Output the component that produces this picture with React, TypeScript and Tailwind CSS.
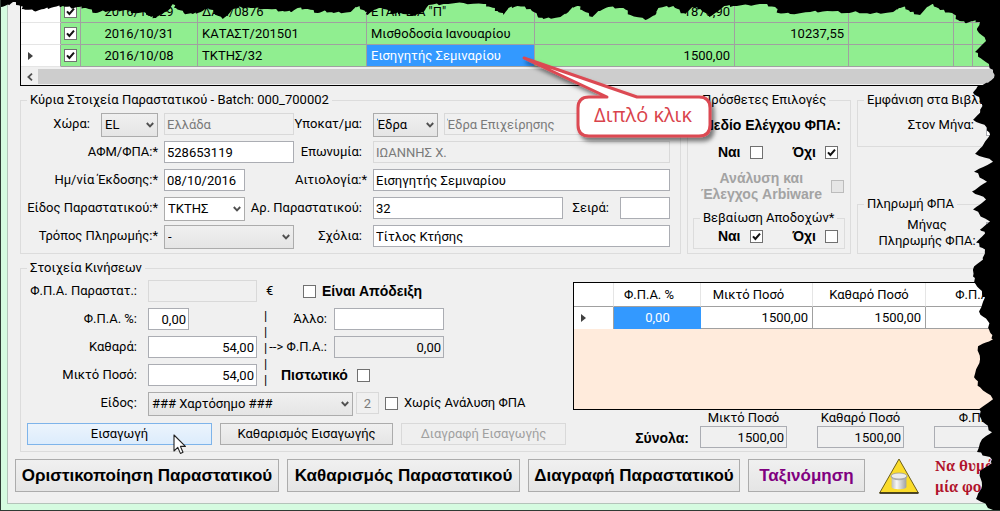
import { useState } from 'react';
import type { InputHTMLAttributes, ReactNode } from 'react';
import { clsx } from 'clsx';

interface SelectBoxProps {
  id: string;
  options: string[];
  label?: string;
  className?: string;
  flat?: boolean;
}

function SelectBox({ id, options, label, className, flat }: SelectBoxProps) {
  return (
    <span className={clsx('relative block h-6 shrink-0', className)}>
      <select
        id={id}
        aria-label={label}
        className={clsx(
          'block h-6 w-full appearance-none border border-[#acacac] pr-4 pl-[3px] leading-5 outline-none',
          flat ? 'bg-white' : 'bg-linear-to-b from-[#f0f0f0] to-[#e5e5e5]'
        )}
      >
        {options.map(o => (
          <option key={o}>{o}</option>
        ))}
      </select>
      <svg className="pointer-events-none absolute top-2 right-1 h-2 w-2" viewBox="0 0 8 8" fill="none">
        <path d="M0.8 2 L4 5.4 L7.2 2" stroke="#505050" strokeWidth="1.9" />
      </svg>
    </span>
  );
}

interface TextBoxProps extends InputHTMLAttributes<HTMLInputElement> {
  right?: boolean;
  gray?: boolean;
}

function TextBox({ className, right, gray, disabled, ...rest }: TextBoxProps) {
  return (
    <input
      type="text"
      disabled={disabled}
      className={clsx(
        'block h-[22px] min-w-0 border px-[2px] outline-none',
        right && 'text-right',
        disabled ? 'border-[#d9d9d9] text-[#7a7a7a]' : 'border-[#abadb3]',
        !disabled && !gray && 'bg-white',
        className
      )}
      {...rest}
    />
  );
}

interface TickProps {
  id: string;
  label?: string;
  on?: boolean;
  disabled?: boolean;
}

function Tick({ id, label, on = false, disabled }: TickProps) {
  const [checked, setChecked] = useState(on);
  return (
    <span className="relative block h-[13px] w-[13px] shrink-0">
      <input
        type="checkbox"
        id={id}
        aria-label={label}
        checked={checked}
        disabled={disabled}
        onChange={e => setChecked(e.target.checked)}
        className={clsx(
          'block h-[13px] w-[13px] appearance-none border',
          disabled ? 'border-[#bcbcbc] bg-[#e6e6e6]' : 'border-[#707070] bg-white'
        )}
      />
      {checked && (
        <svg className="pointer-events-none absolute inset-0 h-[13px] w-[13px]" viewBox="0 0 13 13" fill="none">
          <path d="M3 6.3 L5.4 9 L10 3.6" stroke="#111" strokeWidth="2" />
        </svg>
      )}
    </span>
  );
}

interface GroupProps {
  title: string;
  className?: string;
  children: ReactNode;
}

function Group({ title, className, children }: GroupProps) {
  return (
    <fieldset className={clsx('min-w-0 border border-[#dcdcdc]', className)}>
      <legend className="ml-[6px] px-[3px] leading-4 whitespace-nowrap">{title}</legend>
      {children}
    </fieldset>
  );
}

interface FieldLabelProps {
  htmlFor: string;
  className?: string;
  children: ReactNode;
}

function FieldLabel({ htmlFor, className, children }: FieldLabelProps) {
  return (
    <label htmlFor={htmlFor} className={clsx('shrink-0 text-right leading-[22px] whitespace-nowrap', className)}>
      {children}
    </label>
  );
}

const strong = "font-['Liberation_Sans',sans-serif] text-[14px] leading-4 font-bold";

const documents = [
  { date: '2016/10/29', code: 'ΔΑΠ/0876', reason: 'ΕΤΑΙΡΕΙΑ "Π"', debit: '1876,90', credit: '' },
  { date: '2016/10/31', code: 'ΚΑΤΑΣΤ/201501', reason: 'Μισθοδοσία Ιανουαρίου', debit: '', credit: '10237,55' },
  { date: '2016/10/08', code: 'ΤΚΤΗΣ/32', reason: 'Εισηγητής Σεμιναρίου', debit: '1500,00', credit: '' },
];

function RowArrow() {
  return (
    <svg className="ml-[7px] h-2 w-[5px]" viewBox="0 0 5 8">
      <path d="M0 0 L5 4 L0 8 Z" fill="#404040" />
    </svg>
  );
}

function DocumentsGrid() {
  const cell = 'h-[22px] border-r border-b border-[#a0a0a0] px-1';
  return (
    <div className="border-b border-l border-black bg-white pt-px">
      <table className="w-full table-fixed border-separate border-spacing-0 bg-[#90ee90]">
        <colgroup>
          <col className="w-10" />
          <col className="w-5" />
          <col className="w-[117px]" />
          <col className="w-[169px]" />
          <col className="w-[168px]" />
          <col className="w-[200px]" />
          <col className="w-[114px]" />
          <col className="w-[105px]" />
          <col className="w-[19px]" />
          <col />
        </colgroup>
        <tbody>
          {documents.map((d, i) => {
            const selected = i === documents.length - 1;
            return (
              <tr key={d.code}>
                <td className="h-[22px] border-r border-b border-r-[#a0a0a0] border-b-[#e5e5e5] bg-white">
                  {selected && <RowArrow />}
                </td>
                <td className="h-[22px] border-r border-b border-[#a0a0a0] pl-[3px]">
                  <Tick id={`doc-${i}`} label={d.code} on />
                </td>
                <td className={clsx(cell, 'text-center')}>{d.date}</td>
                <td className={cell}>{d.code}</td>
                <td className={clsx(cell, selected && 'bg-[#3399ff] text-white')}>{d.reason}</td>
                <td className={clsx(cell, 'text-right')}>{d.debit}</td>
                <td className={clsx(cell, 'text-right')}>{d.credit}</td>
                <td className={cell} />
                <td className={cell} />
                <td className={cell} />
              </tr>
            );
          })}
        </tbody>
      </table>
      <div className="flex h-[18px] items-stretch bg-[#f0f0f0] pt-[2px] pb-px">
        <button type="button" aria-label="Κύλιση αριστερά" className="flex w-[17px] items-center justify-center">
          <svg className="h-2 w-[6px]" viewBox="0 0 6 8" fill="none">
            <path d="M5 0.7 L1.4 4 L5 7.3" stroke="#505050" strokeWidth="1.8" />
          </svg>
        </button>
        <div className="flex-1 bg-[#cdcdcd]" />
      </div>
    </div>
  );
}

function MainDetails() {
  return (
    <Group title="Κύρια Στοιχεία Παραστατικού - Batch: 000_700002" className="pr-[10px] pb-[6px]">
      <div className="flex flex-col gap-[6px] pt-[5px]">
        <div className="flex h-[22px]">
          <FieldLabel htmlFor="country" className="w-[69px]">Χώρα:</FieldLabel>
          <SelectBox id="country" options={['EL']} className="ml-[11px] w-[57px]" />
          <TextBox aria-label="Όνομα χώρας" disabled defaultValue="Ελλάδα" className="ml-[6px] w-[130px]" />
          <FieldLabel htmlFor="branch" className="w-[68px]">Υποκατ/μα:</FieldLabel>
          <SelectBox id="branch" options={['Έδρα']} className="ml-[11px] w-[65px]" />
          <TextBox aria-label="Όνομα υποκαταστήματος" disabled defaultValue="Έδρα Επιχείρησης" className="ml-[6px] flex-1" />
        </div>
        <div className="flex h-[22px]">
          <FieldLabel htmlFor="vat" className="w-[137px]">ΑΦΜ/ΦΠΑ:*</FieldLabel>
          <TextBox id="vat" defaultValue="528653119" className="ml-[6px] w-[130px]" />
          <FieldLabel htmlFor="name" className="w-[68px]">Επωνυμία:</FieldLabel>
          <TextBox id="name" disabled defaultValue="ΙΩΑΝΝΗΣ Χ." className="ml-[11px] flex-1" />
        </div>
        <div className="flex h-[22px]">
          <FieldLabel htmlFor="issued" className="w-[137px]">Ημ/νία Έκδοσης:*</FieldLabel>
          <TextBox id="issued" defaultValue="08/10/2016" className="ml-[6px] w-[81px]" />
          <FieldLabel htmlFor="reason" className="w-[122px]">Αιτιολογία:*</FieldLabel>
          <TextBox id="reason" defaultValue="Εισηγητής Σεμιναρίου" className="ml-[6px] flex-1" />
        </div>
        <div className="flex h-[22px]">
          <FieldLabel htmlFor="doctype" className="w-[137px]">Είδος Παραστατικού:*</FieldLabel>
          <SelectBox id="doctype" options={['ΤΚΤΗΣ']} flat className="ml-[6px] w-[81px]" />
          <FieldLabel htmlFor="docno" className="w-[117px]">Αρ. Παραστατικού:</FieldLabel>
          <TextBox id="docno" defaultValue="32" className="ml-[11px] flex-1" />
          <FieldLabel htmlFor="series" className="w-[46px]">Σειρά:</FieldLabel>
          <TextBox id="series" className="ml-[11px] w-[50px]" />
        </div>
        <div className="flex h-[22px]">
          <FieldLabel htmlFor="payment" className="w-[137px]">Τρόπος Πληρωμής:*</FieldLabel>
          <SelectBox id="payment" options={['-']} className="ml-[6px] w-[130px]" />
          <FieldLabel htmlFor="notes" className="w-[68px]">Σχόλια:</FieldLabel>
          <TextBox id="notes" defaultValue="Τίτλος Κτήσης" className="ml-[11px] flex-1" />
        </div>
      </div>
    </Group>
  );
}

function ExtraOptions() {
  return (
    <Group title="Πρόσθετες Επιλογές" className="px-[5px] pb-1">
      <p className={clsx('pt-[9px] pr-1 text-right whitespace-nowrap', strong)}>Πεδίο Ελέγχου ΦΠΑ:</p>
      <div className={clsx('mt-[11px] flex h-4 items-center justify-end pr-[7px]', strong)}>
        <label htmlFor="check-yes" className="mr-[9px]">Ναι</label>
        <Tick id="check-yes" />
        <label htmlFor="check-no" className="mr-[9px] ml-[30px]">Όχι</label>
        <Tick id="check-no" on />
      </div>
      <div className={clsx('mt-[10px] flex items-center justify-end gap-[9px] pr-px text-[#a3a3a3]', strong)}>
        <label htmlFor="arbiware" className="text-center whitespace-nowrap">
          Ανάλυση και
          <br />
          Έλεγχος Arbiware
        </label>
        <Tick id="arbiware" disabled />
      </div>
      <Group title="Βεβαίωση Αποδοχών*" className="mt-2 pt-[2px] pb-1">
        <div className={clsx('flex h-4 items-center justify-end pr-[6px]', strong)}>
          <label htmlFor="cert-yes" className="mr-[9px]">Ναι</label>
          <Tick id="cert-yes" on />
          <label htmlFor="cert-no" className="mr-[9px] ml-[30px]">Όχι</label>
          <Tick id="cert-no" />
        </div>
      </Group>
    </Group>
  );
}

function BookGroups() {
  return (
    <div className="flex min-w-0 flex-col justify-between overflow-hidden">
      <Group title="Εμφάνιση στα Βιβλία" className="pt-[3px] pb-[7px]">
        <div className="flex h-7 items-center pl-[46px]">
          <FieldLabel htmlFor="month" className="w-[70px]">Στον Μήνα:</FieldLabel>
          <TextBox id="month" className="ml-[12px] w-10" />
        </div>
      </Group>
      <Group title="Πληρωμή ΦΠΑ" className="pt-[5px] pb-1">
        <div className="flex items-center pl-[19px]">
          <label htmlFor="pay-month" className="w-[100px] shrink-0 text-center leading-4 whitespace-nowrap">
            Μήνας
            <br />
            Πληρωμής ΦΠΑ:
          </label>
          <TextBox id="pay-month" className="ml-[9px] w-10" />
        </div>
      </Group>
    </div>
  );
}

// hover pointer, drawn over the lower right of the insert button
function Pointer() {
  return (
    <svg className="absolute top-[10px] left-[145px] h-[21px] w-[13px]" viewBox="0 0 13 21">
      <path
        d="M1 1 V17 L4.8 13.4 L7.4 19.4 L10 18.2 L7.4 12.4 H12.4 Z"
        fill="#fff"
        stroke="#222"
        strokeWidth="1.1"
        strokeLinejoin="round"
      />
    </svg>
  );
}

function EntryForm() {
  const button = 'h-[22px] border leading-5 whitespace-nowrap';
  return (
    <div className="w-[546px] shrink-0 pt-1">
      <div className="flex h-[22px] items-center">
        <FieldLabel htmlFor="doc-vat" className="w-[116px]">Φ.Π.Α. Παραστατ.:</FieldLabel>
        <TextBox id="doc-vat" disabled className="ml-[11px] w-[109px]" />
        <span className="ml-[9px] w-[37px]">€</span>
        <Tick id="receipt" />
        <label htmlFor="receipt" className={clsx('ml-[6px]', strong)}>Είναι Απόδειξη</label>
      </div>
      <div className="mt-[6px] flex">
        <div className="flex flex-col gap-[6px]">
          <div className="flex">
            <FieldLabel htmlFor="rate" className="w-[116px]">Φ.Π.Α. %:</FieldLabel>
            <TextBox id="rate" right defaultValue="0,00" className="ml-[11px] w-[41px]" />
          </div>
          <div className="flex">
            <FieldLabel htmlFor="net" className="w-[116px]">Καθαρά:</FieldLabel>
            <TextBox id="net" right defaultValue="54,00" className="ml-[11px] w-[109px]" />
          </div>
          <div className="flex">
            <FieldLabel htmlFor="gross" className="w-[116px]">Μικτό Ποσό:</FieldLabel>
            <TextBox id="gross" right defaultValue="54,00" className="ml-[11px] w-[109px]" />
          </div>
        </div>
        <div className="ml-[7px] h-[78px] w-1 leading-4 whitespace-pre-line">{'|\n|\n|\n|\n|'}</div>
        <div className="flex flex-col gap-[6px]">
          <div className="flex">
            <FieldLabel htmlFor="other" className="w-[59px]">Άλλο:</FieldLabel>
            <TextBox id="other" className="ml-[7px] w-[110px]" />
          </div>
          <div className="flex">
            <FieldLabel htmlFor="vat-amount" className="w-[59px]">{'--> Φ.Π.Α.:'}</FieldLabel>
            <TextBox id="vat-amount" right gray readOnly defaultValue="0,00" className="ml-[7px] w-[110px]" />
          </div>
          <div className="flex h-[22px] items-center pl-[13px]">
            <label htmlFor="credit" className={clsx('mr-[9px]', strong)}>Πιστωτικό</label>
            <Tick id="credit" />
          </div>
        </div>
      </div>
      <div className="mt-[6px] flex h-[22px]">
        <FieldLabel htmlFor="kind" className="w-[116px]">Είδος:</FieldLabel>
        <SelectBox id="kind" options={['### Χαρτόσημο ###']} className="ml-[11px] w-[205px]" />
        <TextBox aria-label="Κωδικός είδους" disabled defaultValue="2" className="ml-[3px] w-[23px] text-center" />
        <span className="ml-[6px] flex items-center gap-[6px]">
          <Tick id="no-analysis" />
          <label htmlFor="no-analysis" className="whitespace-nowrap">Χωρίς Ανάλυση ΦΠΑ</label>
        </span>
      </div>
      <div className="mt-[9px] flex gap-2 pl-[6px]">
        <button
          type="button"
          className={clsx(button, 'relative w-[185px] border-[#7eb4ea] bg-linear-to-b from-[#ecf4fc] to-[#dcecfc]')}
        >
          Εισαγωγή
          <Pointer />
        </button>
        <button type="button" className={clsx(button, 'w-[173px] border-[#acacac] bg-linear-to-b from-[#f0f0f0] to-[#e5e5e5]')}>
          Καθαρισμός Εισαγωγής
        </button>
        <button type="button" disabled className={clsx(button, 'w-[165px] border-[#d9d9d9] bg-[#efefef] text-[#a0a0a0]')}>
          Διαγραφή Εισαγωγής
        </button>
      </div>
    </div>
  );
}

function EntriesGrid() {
  const head = 'h-6 border-r border-b border-r-[#e5e5e5] border-b-[#a0a0a0] text-center font-normal whitespace-nowrap';
  const cell = 'h-[22px] border-r border-b border-[#a0a0a0] px-1 text-right';
  return (
    <div className="h-32 border border-black bg-[#ffebdc]">
      <table className="w-full table-fixed border-separate border-spacing-0 bg-white">
        <colgroup>
          <col className="w-10" />
          <col className="w-[87px]" />
          <col className="w-28" />
          <col className="w-[113px]" />
          <col />
        </colgroup>
        <thead>
          <tr>
            <th className={head} aria-label="Γραμμή" />
            <th className={clsx(head, 'pr-4')}>Φ.Π.Α. %</th>
            <th className={clsx(head, 'pr-4')}>Μικτό Ποσό</th>
            <th className={head}>Καθαρό Ποσό</th>
            <th className={clsx(head, 'pl-6')}>Φ.Π.Α.</th>
          </tr>
        </thead>
        <tbody>
          <tr>
            <td className="h-[22px] border-r border-[#a0a0a0]"><RowArrow /></td>
            <td className="h-[22px] bg-[#3399ff] text-center text-white">0,00</td>
            <td className={cell}>1500,00</td>
            <td className={cell}>1500,00</td>
            <td className={cell} />
          </tr>
        </tbody>
      </table>
    </div>
  );
}

function Totals() {
  return (
    <div className="flex items-end">
      <span className={clsx('w-[116px] shrink-0 pb-[2px] text-right', strong)}>Σύνολα:</span>
      <div className="ml-[11px] flex shrink-0 gap-[30px]">
        <div className="w-[87px] text-center">
          <label htmlFor="sum-gross" className="block leading-4">Μικτό Ποσό</label>
          <TextBox id="sum-gross" right gray readOnly defaultValue="1500,00" className="w-full" />
        </div>
        <div className="w-[87px] text-center">
          <label htmlFor="sum-net" className="block leading-4 whitespace-nowrap">Καθαρό Ποσό</label>
          <TextBox id="sum-net" right gray readOnly defaultValue="1500,00" className="w-full" />
        </div>
        <div className="w-[87px] text-center">
          <label htmlFor="sum-vat" className="block leading-4">Φ.Π.Α.</label>
          <TextBox id="sum-vat" right gray readOnly className="w-full" />
        </div>
      </div>
    </div>
  );
}

function WarningIcon() {
  return (
    <svg className="h-9 w-10 shrink-0" viewBox="0 0 40 36">
      <defs>
        <linearGradient id="can" x1="0" x2="1">
          <stop offset="0" stopColor="#bdbdbd" />
          <stop offset="0.35" stopColor="#f8f8f8" />
          <stop offset="1" stopColor="#a0a0a0" />
        </linearGradient>
      </defs>
      <path d="M20 1 L39.4 35 L0.6 35 Z" fill="#fbdc2b" stroke="#6b5d1a" strokeWidth="1" />
      <path d="M0.6 35 H39.4" stroke="#2b2714" strokeWidth="1.4" />
      <path d="M12.6 18 V29 C12.6 32 27.4 32 27.4 29 V18 Z" fill="url(#can)" />
      <ellipse cx="20" cy="18" rx="8" ry="3" fill="#ececec" stroke="#9a9a9a" strokeWidth="0.8" />
      <path d="M12 18 C12 23 28 23 28 18" fill="none" stroke="#a8a8a8" strokeWidth="1" />
    </svg>
  );
}

function ActionBar() {
  const button =
    "h-[33px] shrink-0 border border-[#acacac] bg-linear-to-b from-[#f0f0f0] to-[#e5e5e5] font-['Liberation_Sans',sans-serif] text-[17px] font-bold whitespace-nowrap";
  return (
    <div className="flex gap-2 overflow-hidden pt-[7px] pb-[11px] pl-[7px]">
      <button type="button" className={clsx(button, 'w-[264px]')}>Οριστικοποίηση Παραστατικού</button>
      <button type="button" className={clsx(button, 'w-[233px]')}>Καθαρισμός Παραστατικού</button>
      <button type="button" className={clsx(button, 'w-[212px]')}>Διαγραφή Παραστατικού</button>
      <button type="button" className={clsx(button, 'w-[117px] text-[#800080]')}>Ταξινόμηση</button>
      <div className="ml-[6px] flex h-[33px] shrink-0 items-center gap-4">
        <WarningIcon />
        <p className="font-['Noto_Serif','Liberation_Serif',serif] text-[14px] leading-[21px] font-bold whitespace-nowrap text-[#b0122b]">
          Να θυμά
          <br />
          μία φορά
        </p>
      </div>
    </div>
  );
}

function Callout() {
  return (
    <div className="pointer-events-none absolute top-[52px] left-[515px] h-[96px] w-[204px]">
      <svg className="absolute inset-0 h-full w-full" viewBox="0 0 204 96">
        <defs>
          <filter id="drop" x="-10%" y="-10%" width="125%" height="130%">
            <feDropShadow dx="3" dy="4" stdDeviation="2" floodColor="#000" floodOpacity="0.5" />
          </filter>
        </defs>
        <path
          d="M8 6 L121 45 H183 Q194 45 194 56 V73 Q194 84 183 84 H73 Q62 84 62 73 V56 Q62 45 73 45 H91 Z"
          fill="#fff"
          stroke="#dc4a52"
          strokeWidth="3"
          strokeLinejoin="round"
          filter="url(#drop)"
        />
      </svg>
      <span className="absolute top-[45px] left-[60px] w-[134px] text-center font-['Open_Sans',sans-serif] text-[20px] leading-9 text-[#d9434b]">
        Διπλό κλικ
      </span>
    </div>
  );
}

const tornTop: [number, number][] = [
  [0, 7], [8, 5], [12, 2], [20, 6], [22, 9], [33, 11], [43, 9], [53, 7], [62, 6], [70, 8], [78, 7], [85, 8], [95, 13],
  [103, 11], [113, 11], [125, 10], [133, 13], [145, 13], [150, 17], [155, 18], [159, 15], [165, 12], [169, 9], [172, 4],
  [175, 8], [183, 13], [192, 14], [200, 12], [207, 8], [213, 12], [222, 19], [227, 15], [232, 9], [240, 7], [253, 8],
  [267, 9], [282, 11], [290, 12], [297, 8], [307, 9], [317, 13], [325, 11], [333, 13], [350, 12], [355, 7], [359, 7],
  [365, 12], [367, 15], [373, 10], [382, 7], [388, 11], [393, 14], [400, 13], [411, 16], [423, 12], [428, 5], [443, 4],
  [463, 3], [483, 4], [490, 7], [497, 11], [503, 15], [508, 8], [517, 6], [530, 9], [537, 16], [543, 19], [560, 17],
  [568, 12], [572, 7], [578, 6], [583, 11], [592, 17], [598, 11], [608, 7], [623, 8], [630, 15], [645, 20], [655, 15],
  [658, 8], [673, 6], [680, 12], [685, 14], [692, 7], [700, 9], [709, 17], [717, 12], [724, 6], [733, 6], [748, 5],
  [763, 4], [775, 7], [778, 13], [790, 14], [810, 12], [827, 11], [847, 13], [857, 12], [870, 14], [893, 12], [899, 8],
  [905, 7], [910, 12], [920, 15], [927, 7], [933, 4], [940, 10], [952, 13], [958, 20], [965, 23], [973, 21],
];

const tornRight: [number, number][] = [
  [980, 22], [977, 30], [986, 41], [975, 52], [983, 60], [993, 70], [994, 78], [988, 83], [978, 86], [973, 93],
  [980, 100], [982, 105], [980, 113], [973, 120], [987, 128], [990, 135], [982, 147], [975, 154], [993, 162],
  [974, 172], [987, 182], [972, 192], [986, 200], [973, 210], [990, 222], [980, 230], [985, 234], [976, 243],
  [985, 250], [983, 260], [974, 267], [973, 277], [977, 287], [985, 298], [979, 312], [988, 322], [990, 333],
  [993, 340], [978, 347], [980, 360], [974, 378], [980, 388], [993, 400], [979, 410], [982, 422], [992, 433],
  [982, 440], [977, 453], [990, 458], [992, 464], [980, 472], [982, 487], [976, 500], [993, 511],
];

// roughen each edge with small teeth between the main points
function ragged(points: [number, number][]) {
  const out: string[] = [];
  points.forEach(([x, y], i) => {
    out.push(`${x},${y}`);
    const next = points[i + 1];
    if (!next) return;
    for (let s = 1; s < 4; s++) {
      const t = s / 4;
      const wobble = ((i * 7 + s * 5) % 4) * 0.6 - 0.9;
      out.push(`${(x + (next[0] - x) * t + wobble).toFixed(1)},${(y + (next[1] - y) * t - wobble).toFixed(1)}`);
    }
  });
  return out.join(' ');
}

function TornEdge() {
  return (
    <svg
      className="pointer-events-none absolute inset-0 h-full w-full"
      viewBox="0 0 1000 511"
      preserveAspectRatio="none"
    >
      <polygon points={`0,0 ${ragged([...tornTop, ...tornRight])} 1000,511 1000,0`} fill="#000" />
    </svg>
  );
}

export default function App() {
  return (
    <div className="relative min-h-screen overflow-hidden border-b border-l border-[#2f3b34] bg-[#d5fbe0] pb-[6px] pl-[6px] font-['Roboto','Liberation_Sans',sans-serif] text-[13px] leading-4 text-black">
      <div className="overflow-hidden border-b border-l border-[#b4c4ba] bg-[#f0f0f0]">
        <div className="pl-3">
          <DocumentsGrid />
          <div className="grid grid-cols-[minmax(0,661px)_164px_minmax(0,1fr)] gap-x-[6px] pt-[6px]">
            <MainDetails />
            <ExtraOptions />
            <BookGroups />
          </div>
          <Group title="Στοιχεία Κινήσεων" className="mt-[6px] border-r-0 pb-[3px]">
            <div className="flex">
              <EntryForm />
              <div className="ml-[6px] min-w-0 flex-1 overflow-hidden pt-[6px]">
                <EntriesGrid />
                <Totals />
              </div>
            </div>
          </Group>
        </div>
        <ActionBar />
      </div>
      <Callout />
      <TornEdge />
    </div>
  );
}
